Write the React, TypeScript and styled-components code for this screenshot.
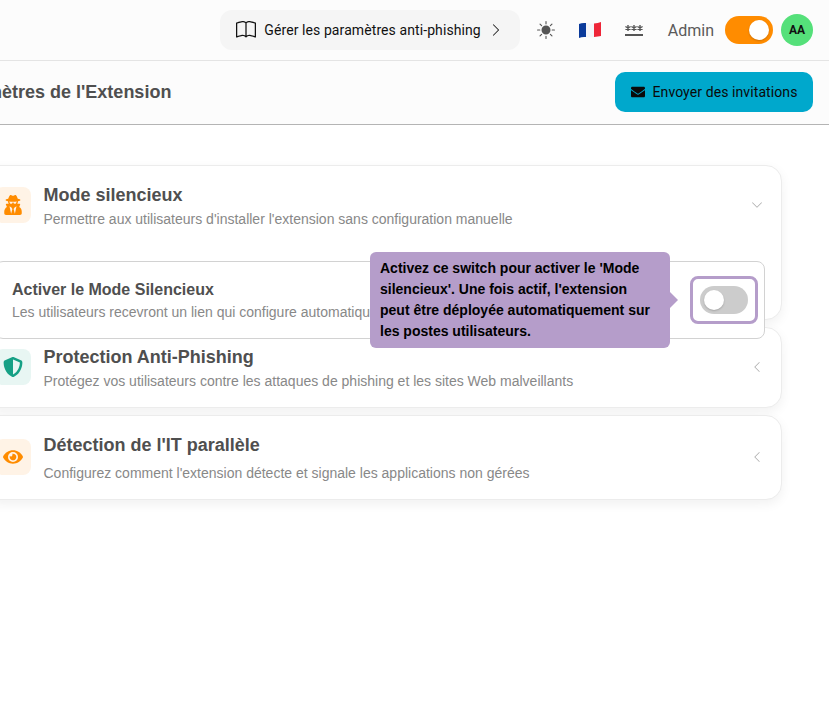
import React from "react";
import styled, { createGlobalStyle } from "styled-components";
import { BsBook, BsChevronRight, BsChevronDown, BsChevronLeft, BsSunFill } from "react-icons/bs";
import { FaEnvelope, FaEye, FaUserSecret } from "react-icons/fa";
import { FaShieldHalved } from "react-icons/fa6";

const Global = createGlobalStyle`
  html, body { margin: 0; padding: 0; background: #fff; overflow: hidden; }
  body { font-family: "Liberation Sans", Arial, sans-serif; }
  * { box-sizing: border-box; }
`;

const Page = styled.div`
  width: 829px;
  height: 720px;
  overflow: hidden;
  background: #fff;
`;

const Header = styled.header`
  height: 61px;
  display: flex;
  align-items: center;
  justify-content: flex-end;
  padding: 0 16px;
  background: #fcfcfc;
  border-bottom: 1px solid #e4e4e4;
  box-shadow: 0 1px 3px rgba(0, 0, 0, 0.04);
`;

const GuidePill = styled.button`
  width: 300px;
  height: 40px;
  display: flex;
  align-items: center;
  padding: 0 17px 0 16px;
  border: 0;
  border-radius: 12px;
  background: #f5f5f5;
  color: #111;
  font-family: Roboto, sans-serif;
  font-size: 14px;
  letter-spacing: 0.09px;
  margin-right: 16px;
  svg:first-child { margin-left: 0.5px; }
  span { margin-left: 8px; flex: 1; text-align: left; white-space: nowrap; }
`;

const IconSlot = styled.div<{ $w: number }>`
  width: ${(p) => p.$w}px;
  height: 40px;
  display: flex;
  align-items: center;
  justify-content: center;
  color: #555;
`;

const AdminLabel = styled.span`
  font-family: Roboto, sans-serif;
  font-size: 16px;
  color: #5a5a5a;
  margin-left: 24px;
  margin-right: 11px;
`;

const Toggle = styled.div<{ $on?: boolean }>`
  width: 48px;
  height: 28px;
  flex: none;
  border-radius: 14px;
  padding: 4px;
  display: flex;
  justify-content: ${(p) => (p.$on ? "flex-end" : "flex-start")};
  background: ${(p) => (p.$on ? "#ff8c00" : "#cccccc")};
  &::after {
    content: "";
    width: 20px;
    height: 20px;
    border-radius: 50%;
    background: #fff;
    box-shadow: 0 1px 2px rgba(0, 0, 0, 0.2);
  }
`;

const Avatar = styled.div`
  width: 32px;
  height: 32px;
  margin-left: 8px;
  border-radius: 50%;
  background: #55e07a;
  color: #111;
  display: flex;
  align-items: center;
  justify-content: center;
  font-family: Roboto, sans-serif;
  font-weight: 700;
  font-size: 12px;
`;

const TitleBar = styled.div`
  height: 64px;
  display: flex;
  align-items: center;
  justify-content: space-between;
  padding: 0 16px 1px 0;
  margin-left: -53px;
  background: #fcfcfc;
  border-bottom: 1px solid #b4b4b4;
`;

const PageTitle = styled.h1`
  margin: 0;
  font-size: 18px;
  font-weight: 700;
  color: #4f4f4f;
  white-space: nowrap;
`;

const InviteButton = styled.button`
  width: 198px;
  height: 40px;
  border: 0;
  border-radius: 10px;
  background: #00a8cc;
  color: #0a0a0a;
  font-family: Roboto, sans-serif;
  font-size: 14px;
  letter-spacing: 0.09px;
  display: flex;
  align-items: center;
  justify-content: center;
  gap: 8px;
`;

const Content = styled.main`
  display: flex;
  flex-direction: column;
  margin-left: -21px;
  width: 803px;
  padding-top: 40px;
`;

const Card = styled.section<{ $h: number; $gap: number }>`
  position: relative;
  height: ${(p) => p.$h}px;
  margin-bottom: ${(p) => p.$gap}px;
  background: #fff;
  border: 1px solid #ececec;
  border-radius: 16px;
  box-shadow: 0 4px 12px rgba(0, 0, 0, 0.06);
`;

const CardHead = styled.div`
  display: flex;
  align-items: center;
  gap: 12.5px;
  padding: 15px 16px 0 15px;
`;

const Tile = styled.div<{ $bg: string; $fg: string }>`
  width: 36px;
  height: 36px;
  flex: none;
  border-radius: 8px;
  display: flex;
  align-items: center;
  justify-content: center;
  background: ${(p) => p.$bg};
  color: ${(p) => p.$fg};
`;

const CardText = styled.div<{ $gap: number }>`
  flex: 1;
  display: flex;
  flex-direction: column;
  gap: ${(p) => p.$gap}px;
  padding-top: 4px;
`;

const CardTitle = styled.h2`
  margin: 0;
  font-size: 18px;
  line-height: 20px;
  font-weight: 700;
  color: #4f4f4f;
`;

const CardSub = styled.p`
  margin: 0;
  font-size: 14px;
  line-height: 20px;
  color: #888;
`;

const Chevron = styled.div`
  width: 16px;
  display: flex;
  justify-content: center;
  color: #aaa;
`;

const OptionPanel = styled.div`
  position: absolute;
  top: 95px;
  left: 15px;
  right: 16px;
  height: 78px;
  z-index: 2;
  display: flex;
  align-items: center;
  justify-content: space-between;
  padding: 0 6px 0 16px;
  background: #fff;
  border: 1px solid #d2d2d2;
  border-radius: 8px;
`;

const OptionText = styled.div`
  display: flex;
  flex-direction: column;
  gap: 1px;
`;

const OptionTitle = styled.div`
  font-size: 16px;
  line-height: 22px;
  font-weight: 700;
  color: #4f4f4f;
`;

const OptionSub = styled.div`
  font-size: 14px;
  line-height: 20px;
  color: #888;
  white-space: nowrap;
`;

const Highlight = styled.div`
  width: 68px;
  height: 48px;
  flex: none;
  display: flex;
  align-items: center;
  justify-content: center;
  border: 3px solid #b59dca;
  border-radius: 8px;
`;

const Tip = styled.div`
  position: absolute;
  left: 374px;
  top: -10px;
  z-index: 3;
  width: 300px;
  height: 96px;
  padding: 6px 10px;
  background: #b59dca;
  border-radius: 6px;
  color: #000;
  font-size: 14px;
  line-height: 21px;
  font-weight: 700;
  &::after {
    content: "";
    position: absolute;
    right: -8px;
    top: 40px;
    border-left: 8px solid #b59dca;
    border-top: 8px solid transparent;
    border-bottom: 8px solid transparent;
  }
`;

const Flag = () => (
  <svg width="22" height="16" viewBox="0 0 22 16" aria-hidden="true">
    <path d="M0 2 Q3 0.5 7 1 L7 15 Q3 14.5 0 16Z" fill="#0a3a9a" />
    <path d="M7 1 Q11 2 15 1.5 L15 15 Q11 15.5 7 15Z" fill="#f4f4f8" />
    <path d="M15 1.5 Q19 1 22 0 L22 14 Q19 14.5 15 15Z" fill="#ee2538" />
  </svg>
);

const Star = ({ x }: { x: number }) => (
  <path d={`M${x} 2V8M${x - 2.6} 3.5L${x + 2.6} 6.5M${x + 2.6} 3.5L${x - 2.6} 6.5`} />
);

const Mask = () => (
  <svg width="18" height="14" viewBox="0 0 18 14" aria-hidden="true">
    <g stroke="#555" strokeWidth="1.4" fill="none">
      <Star x={3} />
      <Star x={9} />
      <Star x={15} />
    </g>
    <rect x="0" y="11" width="18" height="2" fill="#555" />
  </svg>
);

export default function App() {
  return (
    <Page>
      <Global />
      <Header>
        <GuidePill>
          <BsBook size={20} />
          <span>Gérer les paramètres anti-phishing</span>
          <BsChevronRight size={14} />
        </GuidePill>
        <IconSlot $w={20}><BsSunFill size={18} /></IconSlot>
        <IconSlot $w={68}><Flag /></IconSlot>
        <IconSlot $w={20}><Mask /></IconSlot>
        <AdminLabel>Admin</AdminLabel>
        <Toggle $on />
        <Avatar>AA</Avatar>
      </Header>
      <TitleBar>
        <PageTitle>Paramètres de l'Extension</PageTitle>
        <InviteButton><FaEnvelope size={14} />Envoyer des invitations</InviteButton>
      </TitleBar>
      <Content>
        <Card $h={155} $gap={7}>
          <CardHead>
            <Tile $bg="#fff3e6" $fg="#ff8c00"><FaUserSecret size={20} /></Tile>
            <CardText $gap={4}>
              <CardTitle>Mode silencieux</CardTitle>
              <CardSub>Permettre aux utilisateurs d'installer l'extension sans configuration manuelle</CardSub>
            </CardText>
            <Chevron><BsChevronDown size={12} /></Chevron>
          </CardHead>
          <OptionPanel>
            <OptionText>
              <OptionTitle>Activer le Mode Silencieux</OptionTitle>
              <OptionSub>Les utilisateurs recevront un lien qui configure automatiquement</OptionSub>
            </OptionText>
            <Highlight><Toggle /></Highlight>
            <Tip>Activez ce switch pour activer le 'Mode silencieux'. Une fois actif, l'extension peut être déployée automatiquement sur les postes utilisateurs.</Tip>
          </OptionPanel>
        </Card>
        <Card $h={81} $gap={7}>
          <CardHead>
            <Tile $bg="#e8f6f3" $fg="#16a085"><FaShieldHalved size={20} /></Tile>
            <CardText $gap={4}>
              <CardTitle>Protection Anti-Phishing</CardTitle>
              <CardSub>Protégez vos utilisateurs contre les attaques de phishing et les sites Web malveillants</CardSub>
            </CardText>
            <Chevron><BsChevronLeft size={12} /></Chevron>
          </CardHead>
        </Card>
        <Card $h={85} $gap={0}>
          <CardHead>
            <Tile $bg="#fff3e6" $fg="#ff8c00"><FaEye size={20} /></Tile>
            <CardText $gap={8}>
              <CardTitle>Détection de l'IT parallèle</CardTitle>
              <CardSub>Configurez comment l'extension détecte et signale les applications non gérées</CardSub>
            </CardText>
            <Chevron><BsChevronLeft size={12} /></Chevron>
          </CardHead>
        </Card>
      </Content>
    </Page>
  );
}
